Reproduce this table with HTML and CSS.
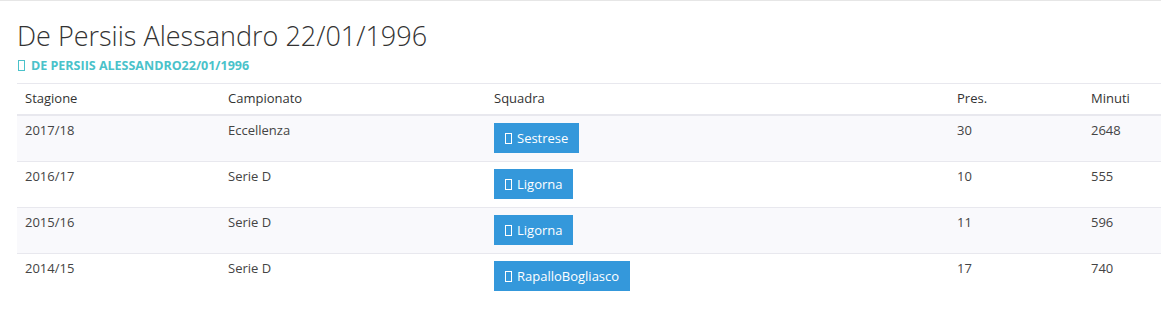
FILE: index.html
```html
<!DOCTYPE html>
<html lang="it">
<head>
<meta charset="utf-8">
<link rel="stylesheet" href="styles.css">
</head>
<body>
<div class="page">
  <h1 class="title">De Persiis Alessandro 22/01/1996</h1>
  <h2 class="subtitle"><span class="tofu"></span>DE PERSIIS ALESSANDRO22/01/1996</h2>
  <table class="career">
    <thead>
      <tr><th class="c1">Stagione</th><th class="c2">Campionato</th><th class="c3">Squadra</th><th class="c4">Pres.</th><th class="c5">Minuti</th></tr>
    </thead>
    <tbody>
      <tr><td>2017/18</td><td>Eccellenza</td><td><a class="btn"><span class="tofu"></span>Sestrese</a></td><td>30</td><td>2648</td></tr>
      <tr><td>2016/17</td><td>Serie D</td><td><a class="btn"><span class="tofu"></span>Ligorna</a></td><td>10</td><td>555</td></tr>
      <tr><td>2015/16</td><td>Serie D</td><td><a class="btn"><span class="tofu"></span>Ligorna</a></td><td>11</td><td>596</td></tr>
      <tr><td>2014/15</td><td>Serie D</td><td><a class="btn"><span class="tofu"></span>RapalloBogliasco</a></td><td>17</td><td>740</td></tr>
    </tbody>
  </table>
</div>
</body>
</html>
```
FILE: styles.css
```css
html, body {
  margin: 0;
  padding: 0;
  background: #fff;
}
body {
  font-family: "Open Sans", "Liberation Sans", sans-serif;
  font-size: 13px;
  color: #444;
}
.page {
  border-top: 1px solid #e6e6e6;
  padding: 0 0 0 17px;
}
.title {
  margin: 19px 0 0 0;
  font-size: 27px;
  font-weight: 300;
  line-height: 32px;
  color: #333;
}
.subtitle {
  margin: 6px 0 0 1px;
  font-size: 12.5px;
  font-weight: 700;
  line-height: 16px;
  color: #4ac2ca;
}
.subtitle .tofu {
  margin-right: 6px;
}
.tofu {
  display: inline-block;
  width: 5px;
  height: 9px;
  border: 1px solid currentColor;
  vertical-align: -1px;
  margin-right: 5px;
}
.career {
  margin-top: 9px;
  width: 1144px;
  border-collapse: collapse;
}
.career th, .career td {
  text-align: left;
  vertical-align: top;
  padding: 0 8px;
  line-height: 18px;
  border-top: 1px solid #e8e8ee;
}
.career th {
  font-weight: 400;
  color: #333;
  padding-top: 5px;
  padding-bottom: 7px;
  border-bottom: 2px solid #e8e8ee;
}
.career td {
  padding-top: 5px;
  padding-bottom: 8px;
  color: #444;
}
.career tbody tr:nth-child(odd) td {
  background: #f9f9fc;
}
.c1 { width: 187px; }
.c2 { width: 250px; }
.c3 { width: 447px; }
.c4 { width: 118px; }
.c5 { width: 62px; }
.btn {
  display: inline-block;
  margin-top: 2px;
  background: #3498db;
  color: #fff;
  padding: 6px 11px 6px 11px;
  line-height: 18px;
  font-size: 13px;
}
.btn .tofu {
  height: 9px;
  width: 5px;
  margin-right: 5px;
}
```
